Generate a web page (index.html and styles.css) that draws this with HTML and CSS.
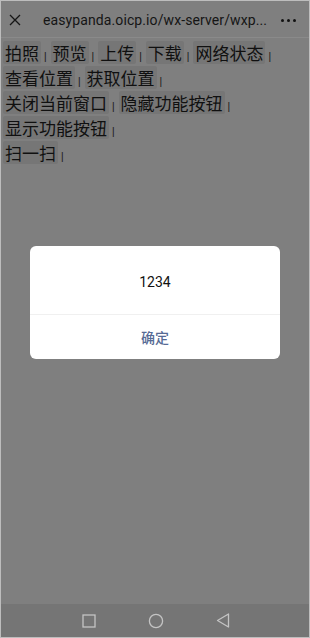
FILE: index.html
```html
<!DOCTYPE html>
<html>
  <head>
    <meta name="viewport" content="width=device-width, initial-scale=1">
    <link rel="stylesheet" href="styles.css">
  </head>
  <body>
    <div class="screen">
      <div class="topbar">
        <svg class="close" width="12" height="12" viewBox="0 0 12 12">
          <path d="M1 1L11 11M11 1L1 11" stroke="#161616" stroke-width="1.3" fill="none"/>
        </svg>
        <div class="url">easypanda.oicp.io/wx-server/wxp...</div>
        <div class="more"><span></span><span></span><span></span></div>
      </div>

      <div class="content">
        <div class="row">
          <button class="btn">拍照</button><span class="sep">|</span>
          <button class="btn">预览</button><span class="sep">|</span>
          <button class="btn">上传</button><span class="sep">|</span>
          <button class="btn">下载</button><span class="sep">|</span>
          <button class="btn">网络状态</button><span class="sep">|</span>
        </div>
        <div class="row">
          <button class="btn">查看位置</button><span class="sep">|</span>
          <button class="btn">获取位置</button><span class="sep">|</span>
        </div>
        <div class="row">
          <button class="btn">关闭当前窗口</button><span class="sep">|</span>
          <button class="btn">隐藏功能按钮</button><span class="sep">|</span>
        </div>
        <div class="row">
          <button class="btn">显示功能按钮</button><span class="sep">|</span>
        </div>
        <div class="row">
          <button class="btn">扫一扫</button><span class="sep">|</span>
        </div>
      </div>

      <div class="mask">
        <div class="dialog">
          <div class="dialog-body">1234</div>
          <div class="dialog-ok">确定</div>
        </div>
      </div>

      <div class="navbar">
        <svg width="14" height="14" viewBox="0 0 14 14">
          <rect x="1" y="1" width="12" height="12" fill="none" stroke="#c4c4c4" stroke-width="1.3"/>
        </svg>
        <svg width="16" height="16" viewBox="0 0 16 16">
          <circle cx="8" cy="8" r="6.6" fill="none" stroke="#c4c4c4" stroke-width="1.3"/>
        </svg>
        <svg width="14" height="15" viewBox="0 0 14 15">
          <path d="M12.5 1L1.5 7.5L12.5 14Z" fill="none" stroke="#c4c4c4" stroke-width="1.3" stroke-linejoin="round"/>
        </svg>
      </div>
    </div>
  </body>
</html>
```

FILE: styles.css
```css
html, body { margin: 0; padding: 0 }
body { width: 310px; height: 638px; overflow: hidden; background: #7f7f7f; font-family: "Noto Sans CJK SC", "Noto Sans", sans-serif }
.screen { position: relative; box-sizing: border-box; width: 310px; height: 638px; border: 1px solid #bdbdbd; display: flex; flex-direction: column; background: #7f7f7f }

.topbar { height: 36px; display: flex; align-items: center; border-bottom: 1px solid #8a8a8a; flex-shrink: 0 }
.close { margin-left: 8px; margin-top: 2px }
.url { margin-left: 22px; font-family: Roboto, "Noto Sans", sans-serif; font-size: 14px; color: #151515; letter-spacing: 0.1px; white-space: nowrap; margin-top: 2px }
.more { margin-left: auto; margin-right: 13px; display: flex; gap: 3px; margin-top: 2px }
.more span { width: 3px; height: 3px; border-radius: 50%; background: #111 }

.content { flex: 1; padding: 3px 2px 0 2px }
.row { display: flex; align-items: baseline; height: 25px }
.btn { font-family: "Noto Sans CJK SC", sans-serif; font-size: 17px; line-height: 23px; height: 23px; padding: 0 2px; margin: 0; border: none; border-radius: 2px; background: #767676; color: #101010 }
.sep { font-family: "Liberation Sans", sans-serif; font-size: 10px; color: #151515; margin: 0 4px 0 3px }

.mask { position: absolute; left: 0; top: 0; right: 0; bottom: 34px; display: flex; justify-content: center; align-items: flex-start; padding-top: 245px; box-sizing: border-box }
.dialog { width: 250px; background: #fff; border-radius: 6px; overflow: hidden }
.dialog-body { height: 69px; display: flex; align-items: center; justify-content: center; font-family: Roboto, "Noto Sans", sans-serif; font-size: 14px; color: #111; border-bottom: 1px solid #f0f0f0; padding-top: 3px; box-sizing: border-box }
.dialog-ok { height: 44px; display: flex; align-items: center; justify-content: center; font-size: 14px; font-weight: 500; color: #576b95 }

.navbar { height: 33px; background: #757575; display: flex; align-items: center; flex-shrink: 0 }
.navbar svg:nth-child(1) { margin-left: 81px }
.navbar svg:nth-child(2) { margin-left: 52px }
.navbar svg:nth-child(3) { margin-left: 52px }
```
